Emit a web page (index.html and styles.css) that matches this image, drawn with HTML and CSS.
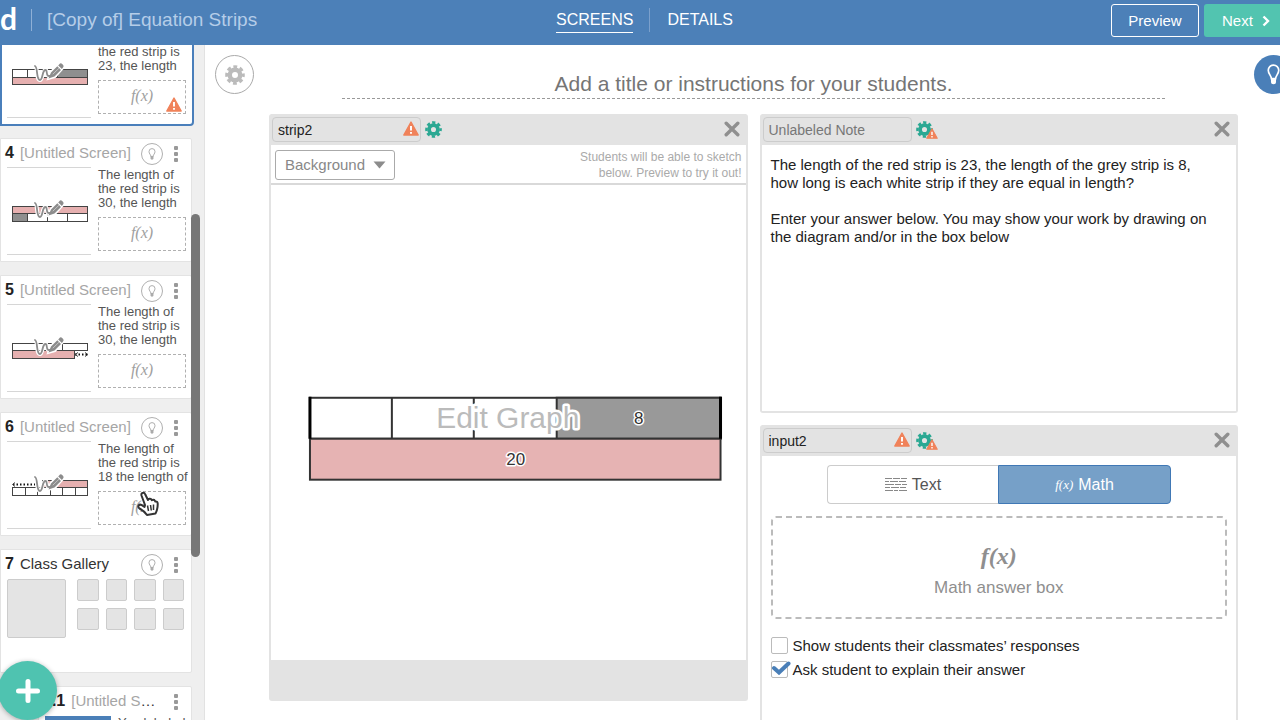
FILE: index.html
```html
<!DOCTYPE html>
<html lang="en">
<head>
    <meta charset="utf-8">
    <title>Equation Strips</title>
    <link rel="stylesheet" href="styles.css">
</head>
<body>
    <!-- Shared icons -->
    <svg class="sprite" aria-hidden="true">
        <symbol id="gear" viewBox="0 0 20 20">
            <circle cx="10" cy="10" r="5.2" fill="none" stroke="currentColor" stroke-width="4.4"/>
            <circle cx="10" cy="10" r="8.3" fill="none" stroke="currentColor" stroke-width="3" stroke-dasharray="3.8 2.72" stroke-dashoffset="1.9"/>
        </symbol>
        <symbol id="warn" viewBox="0 0 16 15">
            <path d="M8 1 L15.2 14 H0.8 Z" fill="#f0825a" stroke="#f0825a" stroke-width="1.4" stroke-linejoin="round"/>
            <path d="M8 5 V9.4 M8 11 V12.8" stroke="#fff" stroke-width="1.9"/>
        </symbol>
        <symbol id="bulb" viewBox="0 0 12 20">
            <path d="M4 14 C4 11 1 9.5 1 6 A5 5 0 0 1 11 6 C11 9.5 8 11 8 14 Z" fill="none" stroke="currentColor" stroke-width="1.6"/>
            <path d="M3.6 13.5 H8.4 V17 Q8.4 19.4 6 19.4 Q3.6 19.4 3.6 17 Z" fill="currentColor"/>
        </symbol>
        <symbol id="close" viewBox="0 0 16 16">
            <path d="M2.2 2.2 L13.8 13.8 M13.8 2.2 L2.2 13.8" stroke="currentColor" stroke-width="3.4" stroke-linecap="round"/>
        </symbol>
        <symbol id="dots" viewBox="0 0 6 18">
            <rect x="1" y="1" width="4" height="4" rx="1" fill="currentColor"/>
            <rect x="1" y="7" width="4" height="4" rx="1" fill="currentColor"/>
            <rect x="1" y="13" width="4" height="4" rx="1" fill="currentColor"/>
        </symbol>
        <symbol id="sketch" viewBox="0 0 32 24">
            <path d="M2 6 C5 7 3 20 7 20 C10 20 9 10 12.500 10 C15 10 12 18 18 15.500" fill="none" stroke="#fff" stroke-width="4"/>
            <path d="M15 19 L17.500 12 L26 4 Q27.500 2 29.500 3.500 Q31.500 6 30 8 L22 17 Z" fill="#fff" stroke="#fff" stroke-width="2"/>
            <path d="M2 6 C5 7 3 20 7 20 C10 20 9 10 12.500 10 C15 10 12 18 18 15.500" fill="none" stroke="#8c8c8c" stroke-width="1.8" stroke-linecap="round"/>
            <path d="M15.500 18.500 L18 12.500 L24.300 6.300 L28 10 L21.500 16.500 Z M25.200 5.400 L27 3.500 Q28 2.700 29.200 3.900 L30.300 5.200 Q31 6.300 30.200 7.300 L28.900 9 Z" fill="#8c8c8c"/>
            <path d="M19.800 14.200 L26 8.200" stroke="#d0d0d0" stroke-width="0.800"/>
        </symbol>
    </svg>

    <header class="topbar">
        <div class="brand">
            <a href="#" class="logo">d</a>
            <span class="doc-title">[Copy of] Equation Strips</span>
        </div>
        <nav class="tabs">
            <a href="#" class="tab active">SCREENS</a>
            <a href="#" class="tab">DETAILS</a>
        </nav>
        <div class="actions">
            <button class="btn preview">Preview</button>
            <button class="btn next">Next
                <svg width="8" height="12" viewBox="0 0 8 12"><path d="M1.500 1.500 L6 6 L1.500 10.500" fill="none" stroke="#fff" stroke-width="2.400"/></svg>
            </button>
        </div>
    </header>

    <div class="workspace">
        <!-- Screen list -->
        <aside class="sidebar">
            <div class="cards">
                <div class="card selected">
                    <div class="card-head"></div>
                    <div class="card-body">
                        <svg class="thumb" viewBox="0 0 84 86">
                            <g stroke="#444" stroke-width="1">
                                <rect x="5.500" y="38.500" width="75" height="8" fill="#fff"/>
                                <rect x="50.500" y="38.500" width="30" height="8" fill="#8f8f8f"/>
                                <rect x="5.500" y="46.500" width="75" height="7" fill="#e6b0b0"/>
                                <path d="M20.500 38 V46 M35.500 38 V46"/>
                            </g>
                            <use href="#sketch" x="26" y="29" width="32" height="24"/>
                        </svg>
                        <div class="card-side">
                            <p>the red strip is<br>23, the length</p>
                            <div class="fx-mini">f(x)<svg class="fx-warn" width="16" height="15"><use href="#warn"/></svg></div>
                        </div>
                    </div>
                </div>

                <div class="card">
                    <div class="card-head">
                        <b>4</b><span class="name">[Untitled Screen]</span>
                        <button class="hint" aria-label="Teacher notes"><svg width="8" height="12"><use href="#bulb"/></svg></button>
                        <button class="more" aria-label="More"><svg width="6" height="18"><use href="#dots"/></svg></button>
                    </div>
                    <div class="card-body">
                        <svg class="thumb" viewBox="0 0 84 86">
                            <g stroke="#444" stroke-width="1">
                                <rect x="5.500" y="38.500" width="75" height="7" fill="#e6b0b0"/>
                                <rect x="5.500" y="45.500" width="75" height="8" fill="#fff"/>
                                <rect x="5.500" y="45.500" width="15" height="8" fill="#8f8f8f"/>
                                <path d="M40.500 45 V53 M60.500 45 V53"/>
                            </g>
                            <use href="#sketch" x="26" y="29" width="32" height="24"/>
                        </svg>
                        <div class="card-side">
                            <p>The length of<br>the red strip is<br>30, the length</p>
                            <div class="fx-mini">f(x)</div>
                        </div>
                    </div>
                </div>

                <div class="card">
                    <div class="card-head">
                        <b>5</b><span class="name">[Untitled Screen]</span>
                        <button class="hint" aria-label="Teacher notes"><svg width="8" height="12"><use href="#bulb"/></svg></button>
                        <button class="more" aria-label="More"><svg width="6" height="18"><use href="#dots"/></svg></button>
                    </div>
                    <div class="card-body">
                        <svg class="thumb" viewBox="0 0 84 86">
                            <g stroke="#444" stroke-width="1">
                                <rect x="5.500" y="38.500" width="75" height="7" fill="#fff"/>
                                <rect x="5.500" y="45.500" width="62" height="8" fill="#e6b0b0"/>
                                <path d="M55.500 38 V46"/>
                                <path d="M68 49.500 H80" stroke="#111" stroke-width="2" stroke-dasharray="1.500 2"/>
                                <path d="M71 47.500 L68 49.500 L71 51.500 M78 47.500 L81 49.500 L78 51.500" fill="none"/>
                            </g>
                            <use href="#sketch" x="26" y="29" width="32" height="24"/>
                        </svg>
                        <div class="card-side">
                            <p>The length of<br>the red strip is<br>30, the length</p>
                            <div class="fx-mini">f(x)</div>
                        </div>
                    </div>
                </div>

                <div class="card">
                    <div class="card-head">
                        <b>6</b><span class="name">[Untitled Screen]</span>
                        <button class="hint" aria-label="Teacher notes"><svg width="8" height="12"><use href="#bulb"/></svg></button>
                        <button class="more" aria-label="More"><svg width="6" height="18"><use href="#dots"/></svg></button>
                    </div>
                    <div class="card-body">
                        <svg class="thumb" viewBox="0 0 84 86">
                            <g stroke="#444" stroke-width="1">
                                <rect x="35.500" y="38.500" width="45" height="7" fill="#e6b0b0"/>
                                <rect x="5.500" y="45.500" width="75" height="8" fill="#fff"/>
                                <path d="M18.500 45 V53 M30.500 45 V53 M43.500 45 V53 M55.500 45 V53 M68.500 45 V53"/>
                                <path d="M6 42.500 H28" stroke="#111" stroke-width="2" stroke-dasharray="1.500 2"/>
                                <path d="M8 40.500 L5.500 42.500 L8 44.500" fill="none"/>
                            </g>
                            <use href="#sketch" x="26" y="29" width="32" height="24"/>
                        </svg>
                        <div class="card-side">
                            <p>The length of<br>the red strip is<br>18 the length of</p>
                            <div class="fx-mini">f(x)
                                <svg class="cursor" width="24" height="26" viewBox="0 0 24 26">
                                    <path d="M9 14 L5.500 4.500 Q5 2 7 1.800 Q8.600 1.600 9.300 3.500 L12 9 Q12.500 7.300 14.200 7.800 Q15.500 8 15.800 9.200 Q17 8.300 18.300 9 Q19 9.500 19.200 10.500 Q21.500 10 21.700 12.500 Q21.900 18 19.500 22.500 L11 24 Q8.500 20 3.500 17.500 Q1.800 16 2.500 14.600 Q3.600 13 5.500 14 L8.500 16 Z" fill="#fff" stroke="#333" stroke-width="2" stroke-linejoin="round"/>
                                    <path d="M11.500 14.500 L12.500 20 M14.500 14 L15.300 19.500 M17.500 13.500 V19" stroke="#333" stroke-width="1.500"/>
                                </svg>
                            </div>
                        </div>
                    </div>
                </div>

                <div class="card">
                    <div class="card-head">
                        <b>7</b><span class="name dark">Class Gallery</span>
                        <button class="hint" aria-label="Teacher notes"><svg width="8" height="12"><use href="#bulb"/></svg></button>
                        <button class="more" aria-label="More"><svg width="6" height="18"><use href="#dots"/></svg></button>
                    </div>
                    <div class="gallery">
                        <span class="tile big"></span>
                        <div class="tiles">
                            <span class="tile"></span><span class="tile"></span><span class="tile"></span><span class="tile"></span>
                            <span class="tile"></span><span class="tile"></span><span class="tile"></span><span class="tile"></span>
                        </div>
                    </div>
                </div>

                <div class="card nested">
                    <div class="card-head">
                        <b>7.1</b><span class="name">[Untitled S<i>…</i></span>
                        <button class="more" aria-label="More"><svg width="6" height="18"><use href="#dots"/></svg></button>
                    </div>
                    <div class="card-body">
                        <div class="thumb-blue"></div>
                        <div class="card-side"><p>You labeled</p></div>
                    </div>
                </div>
            </div>
            <div class="scroll-thumb"></div>
            <button class="add" aria-label="Add screen">
                <svg width="24" height="24" viewBox="0 0 24 24"><path d="M12 2.500 V21.500 M2.500 12 H21.500" stroke="#fff" stroke-width="5" stroke-linecap="round"/></svg>
            </button>
        </aside>

        <!-- Screen editor -->
        <main class="editor">
            <button class="round settings" aria-label="Screen settings"><svg width="20" height="20"><use href="#gear"/></svg></button>

            <div class="stage">
                <input class="title-input" type="text" aria-label="Title" placeholder="Add a title or instructions for your students.">

                <div class="columns">
                    <section class="panel sketch-panel">
                        <div class="panel-head">
                            <div class="label-box">
                                <input type="text" aria-label="Component name" value="strip2">
                                <svg width="16" height="15"><use href="#warn"/></svg>
                            </div>
                            <button class="icon-btn teal" aria-label="Settings"><svg width="17" height="17"><use href="#gear"/></svg></button>
                            <button class="icon-btn close" aria-label="Remove"><svg width="16" height="16"><use href="#close"/></svg></button>
                        </div>
                        <div class="toolbar">
                            <div class="select-wrap">
                                <select aria-label="Background"><option>Background</option></select>
                                <svg class="caret" width="13" height="8" viewBox="0 0 13 8"><path d="M0.500 0.500 H12.500 L6.500 7.500 Z" fill="#8c8c8c"/></svg>
                            </div>
                            <p class="note">Students will be able to sketch<br>below. Preview to try it out!</p>
                        </div>
                        <svg class="graph" viewBox="0 0 475 475">
                            <g stroke="#333" stroke-width="2">
                                <rect x="39" y="213" width="411" height="41" fill="#fff"/>
                                <rect x="286" y="213" width="164" height="41" fill="#999"/>
                                <rect x="39" y="254" width="411" height="41" fill="#e6b3b3"/>
                                <path d="M121 213 V254 M203 213 V254"/>
                                <path d="M39 212 V254 M450 212 V254" stroke="#000" stroke-width="3"/>
                            </g>
                            <text class="num" x="368" y="239">8</text>
                            <text class="num" x="245" y="280">20</text>
                            <text class="edit" x="237" y="243">Edit Graph</text>
                        </svg>
                        <div class="panel-foot"></div>
                    </section>

                    <div class="column">
                        <section class="panel note-panel">
                            <div class="panel-head">
                                <div class="label-box"><input type="text" aria-label="Component name" placeholder="Unlabeled Note"></div>
                                <button class="icon-btn teal" aria-label="Settings"><svg width="17" height="17"><use href="#gear"/></svg><svg class="sub-warn" width="12" height="11"><use href="#warn"/></svg></button>
                                <button class="icon-btn close" aria-label="Remove"><svg width="16" height="16"><use href="#close"/></svg></button>
                            </div>
                            <textarea class="note-text" aria-label="Note">The length of the red strip is 23, the length of the grey strip is 8, how long is each white strip if they are equal in length?

Enter your answer below. You may show your work by drawing on the diagram and/or in the box below</textarea>
                        </section>

                        <section class="panel input-panel">
                            <div class="panel-head">
                                <div class="label-box">
                                    <input type="text" aria-label="Component name" value="input2">
                                    <svg width="16" height="15"><use href="#warn"/></svg>
                                </div>
                                <button class="icon-btn teal" aria-label="Settings"><svg width="17" height="17"><use href="#gear"/></svg><svg class="sub-warn" width="12" height="11"><use href="#warn"/></svg></button>
                                <button class="icon-btn close" aria-label="Remove"><svg width="16" height="16"><use href="#close"/></svg></button>
                            </div>
                            <div class="input-body">
                                <div class="segmented">
                                    <button>
                                        <svg width="22" height="13" viewBox="0 0 22 13"><path d="M0 .5 H7 M8 .5 H15 M16 .5 H22 M0 3.500 H4 M5 3.500 H13 M14 3.500 H21 M0 6.500 H9 M10 6.500 H16 M17 6.500 H22 M0 9.500 H5 M6 9.500 H14 M15 9.500 H21 M0 12.500 H8 M9 12.500 H13 M14 12.500 H22" stroke="#888" stroke-width="1"/></svg>
                                        Text
                                    </button>
                                    <button class="on"><i>f(x)</i> Math</button>
                                </div>
                                <div class="answer-box">
                                    <span class="fx">f(x)</span>
                                    <span>Math answer box</span>
                                </div>
                                <div class="checks">
                                    <label class="check"><input type="checkbox">Show students their classmates’ responses</label>
                                    <label class="check">
                                        <input type="checkbox" checked>Ask student to explain their answer
                                        <svg class="tick" width="20" height="14" viewBox="0 0 20 14"><path d="M3 7 L8 11.500 L17.500 2.500" fill="none" stroke="#4a7fb8" stroke-width="4" stroke-linecap="round"/></svg>
                                    </label>
                                </div>
                            </div>
                        </section>
                    </div>
                </div>
            </div>

            <button class="round tips" aria-label="Tips"><svg width="13" height="21"><use href="#bulb"/></svg></button>
        </main>
    </div>
</body>
</html>
```

FILE: styles.css
```css
* {
    box-sizing: border-box;
}

body {
    margin: 0;
    height: 100vh;
    display: flex;
    flex-direction: column;
    overflow: hidden;
    font-family: "Liberation Sans", Arial, sans-serif;
    font-size: 15px;
    color: #222;
    background: #fff;
}

button, input, select, textarea {
    font: inherit;
    color: inherit;
    margin: 0;
}

button {
    padding: 0;
    border: none;
    background: none;
    cursor: pointer;
}

p {
    margin: 0;
}

.sprite {
    position: absolute;
    width: 0;
    height: 0;
}

/* Top bar */
.topbar {
    flex: none;
    height: 45px;
    display: grid;
    grid-template-columns: 1fr auto 1fr;
    background: #4c80b8;
    color: #fff;
}

.brand {
    display: flex;
    align-items: center;
    height: 39px;
}

.logo {
    width: 31px;
    color: #fff;
    font-family: Lato, sans-serif;
    font-size: 30px;
    font-weight: bold;
    line-height: 36px;
    padding-bottom: 3px;
    text-decoration: none;
}

.doc-title {
    padding-left: 15px;
    border-left: 1px solid #8fb0d6;
    font-size: 19px;
    line-height: 22px;
    color: #b5cde8;
}

.tabs {
    display: flex;
    align-items: center;
    height: 39px;
    padding-left: 9px;
}

.tab {
    color: #fff;
    font-size: 16px;
    line-height: 24px;
    padding-top: 1px;
    text-decoration: none;
    border-bottom: 1px solid transparent;
}

.tab.active {
    border-color: #fff;
}

.tab + .tab {
    margin-left: 34px;
}

.tab + .tab::before {
    content: '';
    float: left;
    width: 1px;
    height: 24px;
    margin-left: -18px;
    background: #7ba0cc;
}

.actions {
    display: flex;
    justify-content: flex-end;
    gap: 5px;
    padding-top: 4px;
}

.btn {
    height: 33px;
    border-radius: 3px;
    font-size: 15px;
}

.preview {
    width: 88px;
    border: 1px solid #fff;
}

.next {
    width: 76px;
    display: flex;
    align-items: center;
    gap: 9px;
    padding-left: 18px;
    background: #52c4b0;
    border-radius: 3px 0 0 3px;
}

.workspace {
    flex: 1;
    min-height: 0;
    display: flex;
}

/* Sidebar */
.sidebar {
    position: relative;
    flex: none;
    width: 205px;
    overflow: hidden;
    background: #efefef;
    border-right: 1px solid #e2e2e2;
}

/* list is scrolled part way down */
.cards {
    display: flex;
    flex-direction: column;
    gap: 13px;
    width: 192px;
    margin-top: -44px;
}

.card {
    flex: none;
    height: 124px;
    padding: 3px 6px 0 4px;
    overflow: hidden;
    background: #fff;
    border: 1px solid #e3e3e3;
    border-radius: 0 2px 2px 0;
}

.card.selected {
    width: 194px;
    height: 125px;
    margin-bottom: -1px;
    padding: 2px 7px 0 3px;
    border: 2px solid #4a7fbb;
    border-radius: 0 4px 4px 0;
}

.card.selected .card-side {
    padding-top: 15px;
}

.card.nested {
    margin-left: 38px;
}

.card-head {
    display: flex;
    align-items: center;
    height: 23px;
    margin-bottom: 2px;
    font-size: 16px;
}

.card-head b {
    line-height: 18px;
    padding-bottom: 2px;
}

.name {
    flex: 1;
    padding-left: 6px;
    padding-bottom: 2px;
    font-size: 15px;
    line-height: 18px;
    color: #a6a6a6;
    white-space: nowrap;
}

.name.dark, .name i {
    color: #333;
    font-style: normal;
}

.hint {
    flex: none;
    display: flex;
    align-items: center;
    justify-content: center;
    width: 22px;
    height: 22px;
    margin-right: 10px;
    border: 1px solid #b0b0b0;
    border-radius: 50%;
    color: #aaa;
}

.more {
    display: flex;
    width: 12px;
    color: #999;
}

.card-body {
    display: flex;
    gap: 7px;
    padding-left: 2px;
}

.thumb {
    flex: none;
    width: 84px;
    height: 88px;
    border-top: 1px solid #d6d6d6;
    border-bottom: 1px solid #d6d6d6;
}

.thumb-blue {
    flex: none;
    width: 66px;
    height: 60px;
    margin-top: 1px;
    background: #4a7fb8;
}

.card-side {
    flex: 1;
    min-width: 0;
    padding-top: 1px;
    font-size: 13px;
    line-height: 14px;
    color: #555;
    white-space: nowrap;
}

.fx-mini {
    position: relative;
    width: 88px;
    height: 34px;
    margin-top: 7px;
    border: 1px dashed #b0b0b0;
    font-family: "Liberation Serif", serif;
    font-size: 16px;
    font-style: italic;
    line-height: 30px;
    text-align: center;
    color: #a0a0a0;
}

.fx-warn {
    position: absolute;
    right: 3px;
    bottom: 1px;
}

.cursor {
    position: absolute;
    left: 37px;
    top: -1px;
}

.gallery {
    display: flex;
    gap: 11px;
    padding: 1px 1px 1px 2px;
}

.tile {
    height: 22px;
    background: #e4e4e4;
    border: 1px solid #ccc;
    border-radius: 2px;
}

.tile.big {
    width: 59px;
    height: 59px;
}

.tiles {
    flex: 1;
    display: grid;
    grid-template-columns: repeat(4, 1fr);
    align-content: start;
    gap: 7px;
}

.scroll-thumb {
    position: absolute;
    top: 169px;
    right: 4px;
    width: 9px;
    height: 343px;
    border-radius: 5px;
    background: #777;
}

.add {
    position: absolute;
    left: -2px;
    bottom: 0;
    width: 59px;
    height: 59px;
    display: flex;
    align-items: center;
    justify-content: center;
    border-radius: 50%;
    background: #4fc3b0;
    box-shadow: 0 1px 5px rgba(0, 0, 0, 0.3);
}

/* Editor */
.editor {
    flex: 1;
    min-width: 0;
    display: grid;
    grid-template-columns: 38px minmax(0, 1fr) 26px;
    grid-template-rows: minmax(0, 1fr);
    gap: 16px;
    align-items: start;
    padding: 10px 0 0 10px;
}

.round {
    display: flex;
    align-items: center;
    justify-content: center;
    width: 39px;
    height: 39px;
    border-radius: 50%;
}

.settings {
    border: 1px solid #aaa;
    color: #bbb;
}

.tips {
    background: #4a7fb8;
    color: #fff;
}

.stage {
    height: 100%;
    display: flex;
    flex-direction: column;
}

.title-input {
    height: 44px;
    margin: 0 73px 15px;
    padding: 14px 0 0;
    border: none;
    border-bottom: 1px dashed #999;
    background: none;
    font-size: 21px;
    text-align: center;
}

.title-input::placeholder {
    color: #757575;
    opacity: 1;
}

.columns {
    flex: 1;
    min-height: 0;
    display: grid;
    grid-template-columns: 1fr 1fr;
    align-items: start;
    gap: 12px;
}

.column {
    height: 100%;
    display: flex;
    flex-direction: column;
    gap: 12px;
}

.panel {
    border: 2px solid #e3e3e3;
    border-top: none;
    border-radius: 3px;
}

.panel-head {
    display: flex;
    align-items: center;
    height: 31px;
    padding: 0 6px 1px 1px;
    background: #e3e3e3;
}

.label-box {
    display: flex;
    align-items: center;
    width: 149px;
    height: 25px;
    padding: 0 1px 1px 5px;
    border: 1px solid #ccc;
    border-radius: 4px;
}

.label-box input {
    flex: 1;
    min-width: 0;
    height: 20px;
    padding: 2px 0 0;
    border: none;
    background: none;
    font-size: 14px;
}

.label-box input::placeholder {
    color: #777;
    opacity: 1;
}

.label-box svg {
    flex: none;
}

.icon-btn {
    position: relative;
    display: flex;
    margin-left: 4px;
}

.teal {
    color: #2ba893;
}

.sub-warn {
    position: absolute;
    left: 10px;
    top: 7px;
}

.close {
    margin-left: auto;
    color: #8f8f8f;
}

.toolbar {
    display: flex;
    justify-content: space-between;
    align-items: center;
    height: 40px;
    padding: 1px 4px 0 4px;
    border-bottom: 2px solid #d9d9d9;
}

.select-wrap {
    position: relative;
}

.select-wrap select {
    appearance: none;
    width: 120px;
    height: 30px;
    padding: 0 0 0 9px;
    border: 1px solid #aaa;
    border-radius: 3px;
    background: #fff;
    font-size: 15px;
    color: #888;
}

.caret {
    position: absolute;
    right: 9px;
    top: 11px;
}

.note {
    font-size: 12px;
    line-height: 16px;
    text-align: right;
    color: #aaa;
}

.graph {
    display: block;
    width: 100%;
    aspect-ratio: 1;
}

.graph text {
    text-anchor: middle;
    paint-order: stroke;
    stroke: #fff;
    stroke-linejoin: round;
}

.num {
    font-size: 17px;
    fill: #333;
    stroke-width: 3px;
}

.edit {
    font-size: 30px;
    fill: #bbb;
    stroke-width: 5px;
}

.panel-foot {
    height: 39px;
    background: #e3e3e3;
}

.note-panel {
    flex: none;
    height: 299px;
    display: flex;
    flex-direction: column;
}

.note-text {
    flex: 1;
    padding: 11px 20px 11px 9px;
    border: none;
    resize: none;
    font-size: 15px;
    line-height: 18px;
}

.input-panel {
    flex: none;
    height: 300px;
}

.input-body {
    padding: 9px 9px 0;
}

.segmented {
    display: flex;
    width: 344px;
    height: 39px;
    margin: 0 auto 12px;
}

.segmented button {
    flex: 1;
    display: flex;
    align-items: center;
    justify-content: center;
    gap: 5px;
    border: 1px solid #ccc;
    border-right: none;
    border-radius: 4px 0 0 4px;
    font-size: 16px;
    color: #555;
}

.segmented .on {
    border: 1px solid #4078b5;
    border-radius: 0 4px 4px 0;
    background: #76a0c8;
    color: #fff;
}

.segmented i {
    font-family: "Liberation Serif", serif;
    font-size: 13px;
}

.answer-box {
    display: flex;
    flex-direction: column;
    align-items: center;
    height: 103px;
    padding-top: 23px;
    border: 2px dashed #bbb;
    border-radius: 5px;
    font-size: 17px;
    line-height: 34px;
    color: #8f8f8f;
}

.fx {
    font-family: "Liberation Serif", serif;
    font-size: 24px;
    font-style: italic;
    font-weight: bold;
    line-height: 30px;
}

.checks {
    display: flex;
    flex-direction: column;
    gap: 6px;
    padding-top: 17px;
}

.check {
    position: relative;
    display: flex;
    align-items: center;
    gap: 5px;
    height: 18px;
    font-size: 15px;
}

.check input {
    appearance: none;
    width: 17px;
    height: 17px;
    border: 1px solid #bbb;
    border-radius: 2px;
}

.tick {
    position: absolute;
    left: 0;
    top: 1px;
}
```
